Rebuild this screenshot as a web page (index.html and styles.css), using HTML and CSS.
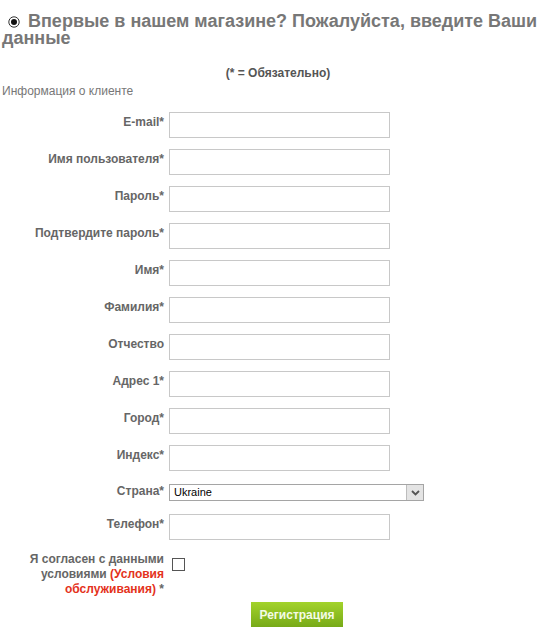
FILE: index.html
```html
<!DOCTYPE html>
<html lang="ru">
<head>
    <meta charset="UTF-8">
    <title>Регистрация</title>
    <link rel="stylesheet" href="styles.css">
</head>
<body>
    <h1 class="title">
        <svg class="radio" width="12" height="12" viewBox="0 0 12 12">
            <circle cx="6" cy="6" r="5.2" fill="#fff" stroke="#333" stroke-width="1"/>
            <circle cx="6" cy="6" r="3" fill="#111"/>
        </svg>
        Впервые в нашем магазине? Пожалуйста, введите Ваши данные
    </h1>
    <div class="required">(* = Обязательно)</div>
    <div class="section">Информация о клиенте</div>
    <form class="form">
        <label class="lbl">E-mail*</label>
        <div class="field"><input type="text" class="inp"></div>
        <label class="lbl">Имя пользователя*</label>
        <div class="field"><input type="text" class="inp"></div>
        <label class="lbl">Пароль*</label>
        <div class="field"><input type="password" class="inp"></div>
        <label class="lbl">Подтвердите пароль*</label>
        <div class="field"><input type="password" class="inp"></div>
        <label class="lbl">Имя*</label>
        <div class="field"><input type="text" class="inp"></div>
        <label class="lbl">Фамилия*</label>
        <div class="field"><input type="text" class="inp"></div>
        <label class="lbl">Отчество</label>
        <div class="field"><input type="text" class="inp"></div>
        <label class="lbl">Адрес 1*</label>
        <div class="field"><input type="text" class="inp"></div>
        <label class="lbl">Город*</label>
        <div class="field"><input type="text" class="inp"></div>
        <label class="lbl">Индекс*</label>
        <div class="field"><input type="text" class="inp"></div>
        <label class="lbl lbl-select">Страна*</label>
        <div class="field field-select">
            <div class="select">
                <span class="select-text">Ukraine</span>
                <span class="select-btn">
                    <svg width="9" height="6" viewBox="0 0 9 6"><path d="M1 1 L4.5 4.5 L8 1" fill="none" stroke="#555" stroke-width="1.8"/></svg>
                </span>
            </div>
        </div>
        <label class="lbl">Телефон*</label>
        <div class="field"><input type="text" class="inp"></div>
        <label class="lbl lbl-terms">Я согласен с данными условиями <a href="#" class="terms">(Условия обслуживания)</a> *</label>
        <div class="field field-check"><span class="check"></span></div>
        <div></div>
        <div class="field field-btn"><button type="button" class="btn">Регистрация</button></div>
    </form>
</body>
</html>
```

FILE: styles.css
```css
body {
    font-family: Arial, "Liberation Sans", sans-serif;
    background-color: #fff;
    margin: 0;
    padding: 0 2px;
    color: #666;
}
.title {
    font-size: 18px;
    line-height: 17px;
    font-weight: bold;
    color: #777;
    margin: 13px 0 0 0;
}
.radio {
    margin: 0 3px 0 6px;
    vertical-align: -1px;
}
.required {
    text-align: center;
    font-size: 12px;
    font-weight: bold;
    color: #555;
    margin-top: 19px;
}
.section {
    font-size: 12px;
    color: #777;
    margin-top: 4px;
}
.form {
    display: grid;
    grid-template-columns: 162px 1fr;
    column-gap: 5px;
    margin-top: 14px;
}
.lbl {
    font-size: 12px;
    font-weight: bold;
    color: #666;
    text-align: right;
    padding-top: 3px;
}
.field {
    margin-bottom: 11px;
}
.inp {
    display: block;
    width: 221px;
    height: 26px;
    box-sizing: border-box;
    border: 1px solid #c8c8c8;
    margin: 0;
    padding: 2px;
}
.lbl-select {
    padding-top: 2px;
}
.field-select {
    padding-top: 2px;
    margin-bottom: 13px;
}
.select {
    display: flex;
    width: 255px;
    height: 17px;
    box-sizing: border-box;
    border: 1px solid #a5a5a5;
    background: #fff;
}
.select-text {
    flex: 1;
    font-size: 11px;
    line-height: 15px;
    color: #000;
    padding-left: 4px;
}
.select-btn {
    width: 16px;
    background: #e4e4e4;
    border-left: 1px solid #bdbdbd;
    display: flex;
    align-items: center;
    justify-content: center;
}
.lbl-terms {
    line-height: 15px;
    padding-top: 1px;
}
.terms {
    color: #e4321b;
    text-decoration: none;
}
.field-check {
    padding: 7px 0 0 3px;
    margin-bottom: 6px;
}
.check {
    display: block;
    width: 13px;
    height: 13px;
    box-sizing: border-box;
    border: 1px solid #555;
    background: #fff;
}
.field-btn {
    padding-top: 5px;
}
.btn {
    margin-left: 82px;
    width: 92px;
    height: 25px;
    border: none;
    background: linear-gradient(#a3d32b, #77aa18);
    color: #f4fbe6;
    font-family: Arial, "Liberation Sans", sans-serif;
    font-size: 12px;
    font-weight: bold;
    cursor: pointer;
}
```
